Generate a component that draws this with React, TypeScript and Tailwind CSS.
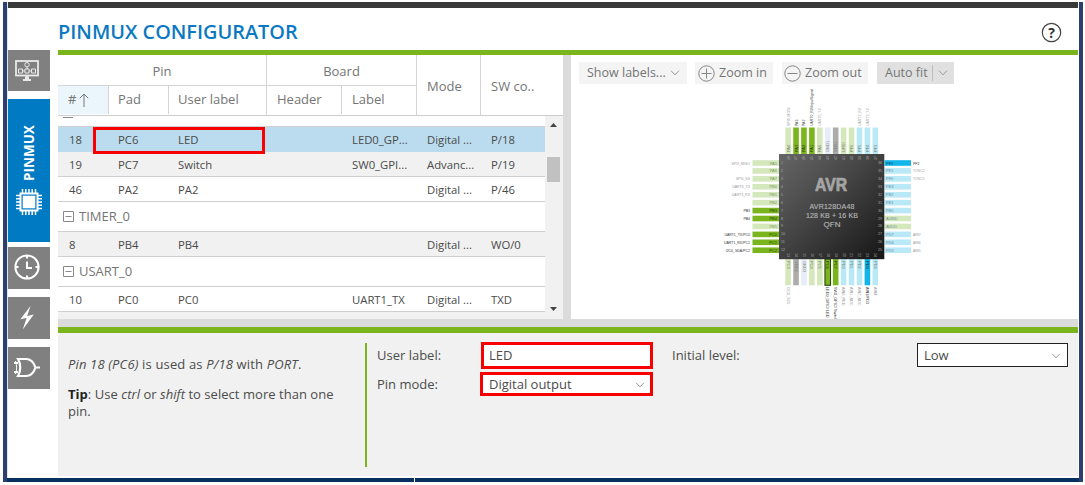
import React from "react";

type Row =
  | { kind: "pin"; cells: [string, string, string, string, string, string]; tone: string }
  | { kind: "group"; name: string };

const rows: Row[] = [
  { kind: "pin", cells: ["18", "PC6", "LED", "LED0_GP...", "Digital ...", "P/18"], tone: "bg-[#bbdcee] border-[#bbdcee]" },
  { kind: "pin", cells: ["19", "PC7", "Switch", "SW0_GPI...", "Advanc...", "P/19"], tone: "bg-[#f1f1f1] border-[#cfcfcf]" },
  { kind: "pin", cells: ["46", "PA2", "PA2", "", "Digital ...", "P/46"], tone: "bg-white border-[#cfcfcf]" },
  { kind: "group", name: "TIMER_0" },
  { kind: "pin", cells: ["8", "PB4", "PB4", "", "Digital ...", "WO/0"], tone: "bg-[#f1f1f1] border-[#cfcfcf]" },
  { kind: "group", name: "USART_0" },
  { kind: "pin", cells: ["10", "PC0", "PC0", "UART1_TX", "Digital ...", "TXD"], tone: "bg-white border-[#cfcfcf]" },
];

const LG = "#d5e8bb";
const G = "#7ab51d";
const LB = "#b9e8f7";
const B = "#12b6ea";
const GR = "#acacac";
const LV = "#e6edf8";

type Pin = [fill: string, name: string, label: string];

const leftPins: Pin[] = [
  [LG, "PA5", "SPI0_MISO"], [LG, "PA6", ""], [LG, "PA7", "SPI0_SS"], [LG, "PB0", "UART3_TX"],
  [LG, "PB1", "UART3_RX"], [LG, "PB2", ""], [G, "PB3", "PB3"], [G, "PB4", "PB4"],
  [LG, "PB5", ""], [G, "PC0", "UART1_TX/PC0"], [G, "PC1", "UART1_RX/PC1"], [G, "PC2", "I2C0_SDA/PC2"],
];
const rightPins: Pin[] = [
  [B, "PF2", "PF2"], [LB, "PF1", "TOSC2"], [LB, "PF0", "TOSC1"], [LB, "PE3", ""],
  [LB, "PE2", ""], [LB, "PE1", ""], [LB, "PE0", ""], [LG, "AGND", ""],
  [LG, "AVDD", ""], [LB, "PD7", "AIN7"], [LB, "PD6", "AIN6"], [LB, "PD5", "AIN5"],
];
const topPins: Pin[] = [
  [LG, "PA4", "SPI0_MOSI"], [G, "PA3", "PA3"], [G, "PA2", "PA2"], [G, "PA1", "UART0_RX/InputSignal"],
  [LG, "PA0", "UART0_TX"], [LV, "GND1", ""], [GR, "VDD1", ""], [LG, "UPDI", ""],
  [LG, "PF6", ""], [LB, "PF5", "UART2_RX"], [LB, "PF4", "UART2_TX"], [LB, "PF3", ""],
];
const bottomPins: Pin[] = [
  [LG, "PC3", "I2C0_SCL"], [GR, "VDD2", ""], [LV, "GND2", ""], [LG, "PC4", ""],
  [LG, "PC5", ""], [G, "PC6", "LED0_GPIO/ LED"], [G, "PC7", "SW0_GPIO/ Switch"], [LB, "PD0", "AIN0_RED"],
  [LB, "PD1", "AIN1_ADC"], [LB, "PD2", "AIN2_ADC"], [B, "PD3", "AIN3/PD3"], [LB, "PD4", "AIN4"],
];

const strong = (f: string) => f === G || f === B;
const ink = (f: string) => (strong(f) ? "#333" : "#999");

function Chip() {
  const p = (i: number) => i * 7.93;
  return (
    <svg width="200" height="232" viewBox="720 87 200 232" className="block overflow-visible" fontFamily="Liberation Sans, sans-serif" fontSize="4">
      <defs>
        <linearGradient id="die" x1="0" y1="0" x2="1" y2="1">
          <stop offset="0" stopColor="#666" />
          <stop offset="0.45" stopColor="#444" />
          <stop offset="1" stopColor="#161616" />
        </linearGradient>
      </defs>
      {leftPins.map(([f, n, l], i) => (
        <g key={n}>
          <rect x="752.5" y={160.2 + p(i)} width="26.5" height="5.6" fill={f} />
          <text x="777" y={164.5 + p(i)} textAnchor="end" fill={strong(f) ? "#26400a" : "#82936c"}>{n}</text>
          <text x="750" y={164.5 + p(i)} textAnchor="end" fill={ink(f)} fontSize="3.5">{l}</text>
        </g>
      ))}
      {rightPins.map(([f, n, l], i) => (
        <g key={n}>
          <rect x="884.5" y={160.2 + p(i)} width="26.5" height="5.6" fill={f} />
          <text x="886" y={164.5 + p(i)} fill={strong(f) ? "#07455a" : "#71909b"}>{n}</text>
          <text x="913" y={164.5 + p(i)} fill={ink(f)} fontSize="3.5">{l}</text>
        </g>
      ))}
      {topPins.map(([f, n, l], i) => (
        <g key={n}>
          <rect x={785.3 + p(i)} y="127.5" width="5.6" height="26.5" fill={f} />
          <text transform={`translate(${789.6 + p(i)} 152) rotate(-90)`} fill={strong(f) ? "#26400a" : "#74806c"}>{n}</text>
          <text transform={`translate(${789.6 + p(i)} 126) rotate(-90)`} fill={ink(f)} fontSize="3.5">{l}</text>
        </g>
      ))}
      {bottomPins.map(([f, n, l], i) => (
        <g key={n}>
          <rect x={785.3 + p(i)} y="259" width="5.6" height="26.3" fill={f} stroke={n === "PC6" ? "#24380c" : "none"} strokeWidth="1" />
          <text transform={`translate(${786.7 + p(i)} 261) rotate(90)`} fill={strong(f) ? "#14240a" : "#74806c"}>{n}</text>
          <text transform={`translate(${786.7 + p(i)} 287) rotate(90)`} fill={ink(f)} fontSize="3.8">{l}</text>
        </g>
      ))}
      <rect x="779" y="154" width="105.3" height="105.2" fill="url(#die)" />
      <g fill="#aaa" fontSize="3.6">
        {leftPins.map((_, i) => (
          <g key={i}>
            <text x="781" y={164 + p(i)}>{i + 1}</text>
            <text x="882" y={164 + p(i)} textAnchor="end">{36 - i}</text>
            <text transform={`translate(${789.5 + p(i)} 160) rotate(-90)`}>{48 - i}</text>
            <text transform={`translate(${787 + p(i)} 253) rotate(90)`}>{13 + i}</text>
          </g>
        ))}
      </g>
      <text x="831" y="191" textAnchor="middle" fontSize="17.500" fontWeight="bold" fill="#a5a5a5" stroke="#a5a5a5" strokeWidth="0.7" textLength="32" lengthAdjust="spacingAndGlyphs">AVR</text>
      <g fill="#b4b4b4" fontSize="7" textAnchor="middle" stroke="#b4b4b4" strokeWidth=".15">
        <text x="832" y="209.200" textLength="45">AVR128DA48</text>
        <text x="832" y="218.200" textLength="52">128 KB + 16 KB</text>
        <text x="832" y="227.200" textLength="17" lengthAdjust="spacingAndGlyphs">QFN</text>
      </g>
    </svg>
  );
}

function Chevron({ className = "" }: { className?: string }) {
  return (
    <svg width="10" height="6" viewBox="0 0 10 6" fill="none" stroke="#999" className={className}>
      <path d="M1 .7 5 4.9 9 .7" />
    </svg>
  );
}

function RoundIcon({ plus }: { plus?: boolean }) {
  return (
    <svg width="17" height="17" viewBox="0 0 17 17" fill="none" stroke="#858585">
      <circle cx="8.5" cy="8.5" r="7.7" />
      <path d={plus ? "M3.5 8.5h10M8.5 3.5v10" : "M3.5 8.5h10"} />
    </svg>
  );
}

function Sidebar() {
  return (
    <nav className="flex w-[42px] shrink-0 flex-col pt-[42px]">
      <div className="flex h-[41px] justify-center bg-[#808080] pt-[10px] pr-1">
        <svg width="24" height="21" viewBox="0 0 24 21" fill="none" stroke="#e8e8e8">
          <rect x="1" y="1" width="22" height="14.5" strokeWidth="1.8" />
          <path d="M8 20h8M10 18h4M10.5 16h3" strokeWidth="2" />
          <circle cx="12" cy="4.7" r="2.2" />
          <path d="M3.5 9h4v4h-4zM10 9h4v4h-4zM16.500 9h4v4h-4zM12 7v2M7.500 11h2.500M14 11h2.500" />
        </svg>
      </div>
      <div className="mt-2 flex h-[143px] flex-col items-center bg-[#007ac2] pt-[24px]">
        <span className="h-[60px] rotate-180 text-center text-[13.500px] leading-[18px] font-bold whitespace-nowrap text-white [writing-mode:vertical-rl]">PINMUX</span>
        <svg width="26" height="26" viewBox="0 0 26 26" className="mt-[6px]" stroke="#fff" fill="none">
          <path d="M6.500 0v26M9.800 0v26M13 0v26M16.200 0v26M19.500 0v26M0 6.500h26M0 9.800h26M0 13h26M0 16.200h26M0 19.500h26" strokeWidth="1.5" />
          <rect x="4.500" y="4.500" width="17" height="17" fill="#007ac2" strokeWidth="2" />
          <rect x="6.700" y="6.700" width="12.600" height="12.600" fill="#fff" stroke="none" />
        </svg>
      </div>
      <div className="mt-[5px] flex h-[42px] justify-center bg-[#808080] pt-[7px] pr-[4px]">
        <svg width="26" height="26" viewBox="0 0 26 26" fill="none" stroke="#fff" strokeWidth="2">
          <circle cx="13" cy="13" r="11.600" />
          <path d="M13 1.500v3M13 21.500v3M1.500 13h3M21.500 13h3M13 7.500V14h5" />
        </svg>
      </div>
      <div className="mt-2 flex h-[42px] justify-center bg-[#808080] pt-[9px] pr-1">
        <svg width="16" height="24" viewBox="0 0 16 24" fill="#fff">
          <path d="M11.500 0 1.300 13.200 7.600 12 3.800 23.500 14.800 8.600 8.200 9.900z" />
        </svg>
      </div>
      <div className="mt-2 flex h-[42px] justify-center bg-[#808080] pt-[10px] pr-[4px]">
        <svg width="26" height="22" viewBox="0 0 26 22" fill="none" stroke="#fff" strokeWidth="2.200">
          <path d="M4 2h8c5 0 8 4 9.500 8.500C20 15 17 19 12 19H4c3-5 3-12 0-17zM21.500 10.500H26M0 6h4M0 15h4" />
          <path d="M1.500 4c1.500 5 1.500 9 0 13" strokeWidth="1" />
        </svg>
      </div>
    </nav>
  );
}

const bl = "border-l border-[#d4d4d4]";

function PinTable() {
  return (
    <div className="relative flex w-[505px] shrink-0 flex-col bg-[#f1f1f1]">
      <div className="flex h-[61px] border-b border-[#cdcdcd] bg-white text-[13px] text-[#757575]">
        <div className="w-[208px]">
          <div className="flex h-[31px] items-center justify-center border-b border-[#d4d4d4] pt-[3px]">Pin</div>
          <div className="flex h-[28px]">
            <div className="flex w-[50px] items-center bg-[#ebf5fc] pl-[10px]">
              #
              <svg width="10" height="14" viewBox="0 0 10 14" fill="none" stroke="#777" className="ml-[3px]">
                <path d="M5 14V1M.8 5.200 5 1l4.200 4.200" />
              </svg>
            </div>
            <div className={`flex w-[60px] items-center pl-[9px] ${bl}`}>Pad</div>
            <div className={`flex w-[98px] items-center pl-[9px] ${bl}`}>User label</div>
          </div>
        </div>
        <div className={`w-[150px] ${bl}`}>
          <div className="flex h-[31px] items-center justify-center border-b border-[#d4d4d4] pt-[3px]">Board</div>
          <div className="flex h-[28px]">
            <div className="flex w-[74px] items-center pl-[10px]">Header</div>
            <div className={`flex w-[75px] items-center pl-[10px] ${bl}`}>Label</div>
          </div>
        </div>
        <div className={`flex w-[64px] items-center pt-[3px] pl-[10px] ${bl}`}>Mode</div>
        <div className={`flex w-[83px] items-center pt-[3px] pl-[10px] ${bl}`}>SW co..</div>
      </div>
      <div className="flex flex-1">
        <div className="w-[487px]">
          <div className="flex h-[11px] border-b border-[#cfcfcf] bg-white pl-[5px]">
            <div className="h-[2px] w-[10px] border-b border-[#888]" />
          </div>
          {rows.map((r, i) =>
            r.kind === "group" ? (
              <div key={i} className="flex h-[30px] items-center border-b border-[#cfcfcf] bg-white pl-[5px] text-[13px] text-[#757575]">
                <svg width="11" height="11" viewBox="0 0 11 11" fill="none" stroke="#8a8a8a" className="mr-[5px]">
                  <path d="M.5 .5h10v10H.5zM2.500 5.500h6" />
                </svg>
                {r.name}
              </div>
            ) : (
              <div key={i} className={`flex h-[25px] items-center border-b pt-[3px] text-[11.300px] text-[#4a4a4a] ${r.tone}`}>
                <span className="w-[60px] pl-[11px]">{r.cells[0]}</span>
                <span className="w-[60px]">{r.cells[1]}</span>
                <span className="w-[174px]">{r.cells[2]}</span>
                <span className="w-[75px]">{r.cells[3]}</span>
                <span className="w-[64px]">{r.cells[4]}</span>
                <span>{r.cells[5]}</span>
              </div>
            )
          )}
        </div>
        <div className="flex w-[18px] flex-col items-center pt-[7px] pr-px">
          <svg width="7" height="4" viewBox="0 0 7 4" fill="#444"><path d="M0 4 3.500 0 7 4z" /></svg>
          <div className="mt-[30px] h-[25px] w-[13px] bg-[#c1c1c1]" />
          <svg width="7" height="4" viewBox="0 0 7 4" fill="#444" className="mt-[125px]"><path d="M0 0h7L3.500 4z" /></svg>
        </div>
      </div>
      <div className="absolute top-[72px] left-[35px] h-[27px] w-[172px] border-[3px] border-[#f80000]" />
    </div>
  );
}

const toolBtn = "flex h-[22px] items-center bg-[#f4f4f4]";

export default function App() {
  return (
    <div className="flex h-[485px] w-[1085px] flex-col bg-white pt-[2px] font-['Open_Sans',sans-serif]">
      <div className="flex h-[476px]">
        <div className="ml-[3px] h-[480px] w-[4px] shrink-0 bg-[#2b406e]" />
        <div className="w-px bg-[#dfe4ee]" />
        <div className="flex w-[1070px] flex-col">
          <div className="h-[6px] shrink-0 bg-[#393939]" />
          <div className="flex flex-1">
            <Sidebar />
            <main className="ml-2 flex w-[1020px] flex-col">
              <header className="flex h-[42px] items-center justify-between pt-[6px] pr-[16px]">
                <h1 className="text-[19.900px] leading-[26px] font-semibold text-[#0b79c2]">PINMUX CONFIGURATOR</h1>
                <svg width="21" height="21" viewBox="0 0 21 21">
                  <circle cx="10.500" cy="10.500" r="9.200" fill="none" stroke="#444" strokeWidth="1.200" />
                  <text x="10.500" y="15.500" textAnchor="middle" fontFamily="Open Sans, sans-serif" fontWeight="bold" fontSize="14" fill="#333">?</text>
                </svg>
              </header>
              <div className="h-[5px] bg-[#7ab51d]" />
              <div className="flex h-[264px]">
                <PinTable />
                <div className="w-[8px] shrink-0 bg-[#dbdbdb]" />
                <section className="flex flex-1 flex-col">
                  <div className="flex pt-[7px] pl-[8px] text-[12.500px] text-[#757575]">
                    <div className={`${toolBtn} w-[108px] pl-[8px]`}><span className="w-[83px]">Show labels...</span><Chevron /></div>
                    <div className={`${toolBtn} ml-[8px] w-[78px] gap-[4px] pl-[3px]`}><RoundIcon plus />Zoom in</div>
                    <div className={`${toolBtn} ml-[9px] w-[86px] gap-[4px] pl-[2px]`}><RoundIcon />Zoom out</div>
                    <div className="ml-[9px] flex h-[22px] w-[77px] items-center bg-[#e0e0e0] pl-[8px]">
                      <span className="w-[47px]">Auto fit</span>
                      <span className="h-[16px] w-px bg-[#bdbdbd]" />
                      <Chevron className="ml-[5px]" />
                    </div>
                  </div>
                  <div className="mt-[3px] ml-[149px]"><Chip /></div>
                </section>
              </div>
              <div className="h-[8px] shrink-0 bg-[#dbdbdb]" />
              <div className="h-[6px] shrink-0 bg-[#7ab51d]" />
              <section className="flex h-[143px] shrink-0 bg-[#f1f1f1] text-[13px] text-[#4c4c4c]">
                <div className="w-[307px] pt-[23px] pl-[10px] leading-[17px]">
                  <p className="tracking-[0.15px]"><i>Pin 18 (PC6)</i> is used as <i>P/18</i> with <i>PORT</i>.</p>
                  <p className="mt-[13px] tracking-[0.04px]"><b className="text-[#222]">Tip</b>: Use <i>ctrl</i> or <i>shift</i> to select more than one<br />pin.</p>
                </div>
                <div className="mt-[10px] h-[124px] w-[2px] bg-[#7ab51d]" />
                <div className="w-[103px] pt-[12px] pl-[10px] leading-[20px]">
                  <div>User label:</div>
                  <div className="mt-[9px]">Pin mode:</div>
                </div>
                <div className="flex w-[186px] flex-col pt-[9px] pl-[10px]">
                  <div className="ml-[1px] flex h-[27px] w-[172px] items-center border-[3px] border-[#f80000] bg-white pl-[5px]">LED</div>
                  <div className="mt-[3px] flex h-[24px] w-[173px] items-center justify-between border-[3px] border-[#f80000] bg-white pt-px pr-[5px] pl-[6px]">
                    Digital output<Chevron />
                  </div>
                </div>
                <div className="w-[261px] pt-[12px] pl-[16px] leading-[20px]">Initial level:</div>
                <div className="mt-[10px] flex h-[24px] w-[151px] items-center justify-between border border-[#222] bg-white pt-px pr-[6px] pl-[6px]">
                  Low<Chevron />
                </div>
              </section>
            </main>
          </div>
        </div>
        <div className="ml-px h-[480px] w-[4px] shrink-0 bg-[#2b406e]" />
      </div>
      <div className="ml-[7px] flex h-[4px] w-[1072px]">
        <div className="w-[407px] bg-[#06305f]" />
        <div className="ml-px flex-1 bg-[#06305f]" />
      </div>
    </div>
  );
}
